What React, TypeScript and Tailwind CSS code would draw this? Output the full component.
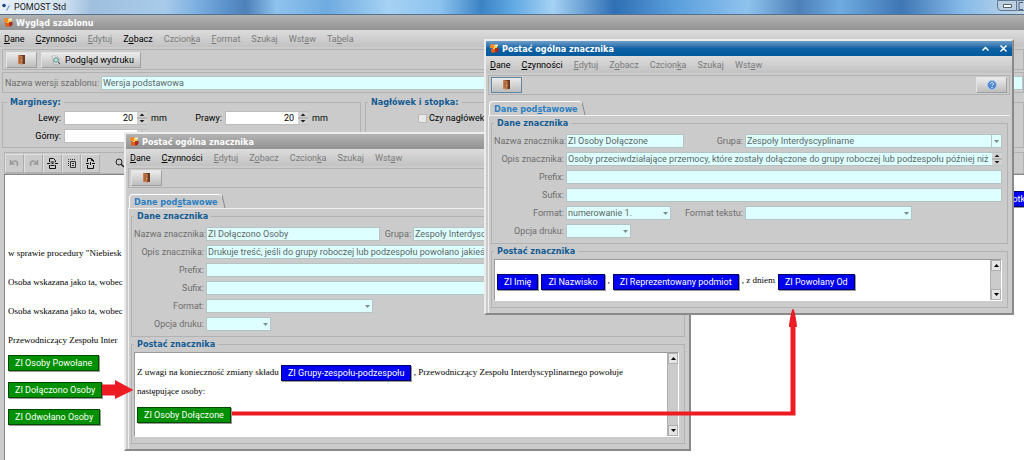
import { useId, type ReactNode } from "react";

const MENU = ["Dane", "Czynności", "Edytuj", "Zobacz", "Czcionka", "Szukaj", "Wstaw"];
const UNDERLINE: Record<string, number> = { Dane: 0, Czynności: 0, Edytuj: 0, Zobacz: 1, Czcionka: 6, Format: 0, Szukaj: 5, Wstaw: 3, Tabela: 2 };

function Hotkey({ text, at }: { text: string; at: number }) {
  return (
    <>
      {text.slice(0, at)}
      <u>{text[at]}</u>
      {text.slice(at + 1)}
    </>
  );
}

function CubeIcon() {
  return (
    <svg width="9" height="9" viewBox="0 0 9 9" className="shrink-0" aria-hidden>
      <path d="M1 4.500h4V8L3 9 1 8z" fill="#e0611a" />
      <path d="M3 1h4v4H3z" fill="#fbd34a" />
      <path d="M1 0h3v4H0V2z" fill="#f08a2c" />
      <path d="M5 4h3.500v3L6.500 8.500H5z" fill="#b02a1c" />
      <path d="M4.500 1.500l1-1H8v2z" fill="#fff3c4" />
    </svg>
  );
}

function DoorIcon() {
  return (
    <svg width="9" height="10" viewBox="0 0 9 10" aria-hidden>
      <path d="M1.500 0H8v9H1.500z" fill="#6b3a22" />
      <path d="M1 0l4.500 1v9L1 8.500z" fill="#c98154" />
      <path d="M2 1.500l2.500.5v6L2 7.500z" fill="#b0683e" />
      <circle cx="4.800" cy="5.500" r=".5" fill="#ffe0a0" />
    </svg>
  );
}

function TitleBar({ title, active = false, children }: { title: string; active?: boolean; children?: ReactNode }) {
  return (
    <header
      className={`flex h-[15px] items-center gap-[3px] pr-1 pl-1 font-[Tahoma,'DejaVu_Sans_Condensed',sans-serif] text-[9px] font-bold text-white ${
        active ? "bg-linear-to-b from-[#6c9fc9] via-[#0d62a3] to-[#005a9c]" : "bg-linear-to-b from-[#b4b4b4] to-[#929292]"
      }`}
    >
      <CubeIcon />
      <h2>{title}</h2>
      {children}
    </header>
  );
}

function MenuBar({ items, enabled }: { items: string[]; enabled: string[] }) {
  return (
    <nav className="flex h-[17px] items-center gap-[11px] bg-linear-to-b from-[#dcdcdc] to-[#c2c2c2] px-1">
      {items.map((item) => (
        <button key={item} type="button" className={enabled.includes(item) ? "text-black" : "text-[#7b7b7b]"}>
          <Hotkey text={item} at={UNDERLINE[item]} />
        </button>
      ))}
    </nav>
  );
}

function ToolButton({ label, focused = false, children }: { label?: string; focused?: boolean; children: ReactNode }) {
  return (
    <button
      type="button"
      aria-label={label}
      className={`flex h-4 min-w-[31px] items-center justify-center gap-1 border bg-linear-to-b from-[#ebebeb] to-[#bdbdbd] ${
        focused ? "border-[#5f87a6]" : "border-[#e4e4e4] border-r-[#a0a0a0] border-b-[#a0a0a0]"
      }`}
    >
      {children}
    </button>
  );
}

function Group({ title, className = "", children }: { title: string; className?: string; children: ReactNode }) {
  return (
    <fieldset className={`min-w-0 border border-[#b2b2b2] ${className}`}>
      <legend className="h-[11px] px-[3px] font-[Tahoma,'DejaVu_Sans_Condensed',sans-serif] leading-[11px] font-bold text-[#135b93]">{title}</legend>
      {children}
    </fieldset>
  );
}

const BOX = "h-[14px] min-w-0 border border-[#b4c4c4] bg-[#deffff] px-px text-[#5a6666]";

function Field({ label, value = "", className = "flex-1", labelClass = "w-[70px]", kind = "text" }: {
  label: string;
  value?: string;
  className?: string;
  labelClass?: string;
  kind?: "text" | "select" | "combo" | "memo";
}) {
  const id = useId();
  return (
    <>
      <label htmlFor={id} className={`shrink-0 text-right whitespace-nowrap text-[#6e6e6e] ${labelClass}`}>
        {label}
      </label>
      <div className={`relative flex min-w-0 ${className}`}>
        {kind === "select" || kind === "combo" ? (
          <select id={id} defaultValue={value} className={`${BOX} w-full appearance-none`}>
            <option>{value}</option>
          </select>
        ) : (
          <input id={id} defaultValue={value} className={`${BOX} w-full`} />
        )}
        {(kind === "select" || kind === "combo") && (
          <span className={`pointer-events-none absolute inset-y-0 right-0 flex w-[11px] items-center justify-center ${kind === "combo" ? "border border-[#b4c4c4]" : ""}`}>
            <svg width="5" height="3" viewBox="0 0 5 3" aria-hidden><path d="M0 0h5L2.500 3z" fill="#7d8d8d" /></svg>
          </span>
        )}
        {kind === "memo" && <Spinner />}
      </div>
    </>
  );
}

function Spinner() {
  return (
    <span className="pointer-events-none absolute inset-y-px right-0 flex w-[10px] flex-col items-center justify-around bg-[#d2d2d2]">
      <svg width="10" height="12" viewBox="0 0 10 12" aria-hidden>
        <path d="M0 6h10" stroke="#999" />
        <path d="M5 1.500L7.500 4h-5zM5 10.500L7.500 8h-5z" fill="#222" />
      </svg>
    </span>
  );
}

function Tag({ color = "blue", children }: { color?: "blue" | "green"; children: ReactNode }) {
  return (
    <span
      className={`inline-block h-4 border px-[6px] align-middle font-[Tahoma,Roboto,'Noto_Sans',sans-serif] text-[9px] leading-[14px] whitespace-nowrap text-white shadow-[1px_1px_0_#999] ${
        color === "blue" ? "border-[#00006a] bg-[#0000f0]" : "border-[#004800] bg-[#009000]"
      }`}
    >
      {children}
    </span>
  );
}

function Editor({ className = "", children }: { className?: string; children: ReactNode }) {
  return (
    <div className={`flex border border-[#9a9a9a] border-r-white border-b-white bg-white ${className}`}>
      <div className="min-w-0 flex-1 font-['Liberation_Serif',serif] text-[9px] text-black">{children}</div>
      <div className="flex w-[11px] flex-col justify-between border-l border-[#b0b0b0] bg-[#cbcbcb]">
        <button type="button" aria-label="W górę" className="flex h-[11px] items-center justify-center border border-[#b0b0b0] bg-[#e4e4e4]">
          <svg width="5" height="3" viewBox="0 0 5 3" aria-hidden><path d="M0 3h5L2.500 0z" /></svg>
        </button>
        <button type="button" aria-label="W dół" className="flex h-[11px] items-center justify-center border border-[#b0b0b0] bg-[#e4e4e4]">
          <svg width="5" height="3" viewBox="0 0 5 3" aria-hidden><path d="M0 0h5L2.500 3z" /></svg>
        </button>
      </div>
    </div>
  );
}

function MarkerWindow({ className, active = false, fields, children }: { className: string; active?: boolean; fields: ReactNode; children: ReactNode }) {
  return (
    <section className={`absolute border-2 border-[#ececec] border-r-[#8a8a8a] border-b-[#8a8a8a] bg-[#cbcbcb] ${className}`}>
      <TitleBar title="Postać ogólna znacznika" active={active}>
        {active && (
          <span className="ml-auto flex gap-[9px]">
            <button type="button" aria-label="Zwiń">
              <svg width="9" height="9" viewBox="0 0 9 9" fill="none" stroke="#fff" strokeWidth="1.500"><path d="M1.500 6.500l3-3 3 3" /></svg>
            </button>
            <button type="button" aria-label="Zamknij">
              <svg width="9" height="9" viewBox="0 0 9 9" fill="none" stroke="#fff" strokeWidth="1.500"><path d="M1.500 1.500l6 6M7.500 1.500l-6 6" /></svg>
            </button>
          </span>
        )}
      </TitleBar>
      <MenuBar items={MENU} enabled={["Dane", "Czynności"]} />
      <div className="mx-[2px] mt-[2px] flex h-5 items-center justify-between border border-[#b2b2b2] px-[2px]">
        <ToolButton label="Wyjście" focused={active}><DoorIcon /></ToolButton>
        {active && (
          <ToolButton label="Pomoc">
            <svg width="10" height="10" viewBox="0 0 10 10" aria-hidden>
              <circle cx="5" cy="5" r="4.500" fill="#4b86cf" stroke="#a9c6ea" />
              <path d="M3.500 4c0-2 3-2 3 0 0 1-1.500 1-1.500 2M5 7v1" fill="none" stroke="#fff" />
            </svg>
          </ToolButton>
        )}
      </div>
      <div className="mt-[6px] flex h-[14px] pl-[3px]">
        <button type="button" className="rounded-t border-t border-l border-white px-1 font-[Tahoma,'DejaVu_Sans_Condensed',sans-serif] font-bold text-[#2b7fc4]">
          <Hotkey text="Dane podstawowe" at={8} />
        </button>
        <svg width="4" height="14" viewBox="0 0 4 14" aria-hidden><path d="M0 1l3 13" stroke="#888" fill="none" /></svg>
      </div>
      <div className="mx-[2px] border-t border-l border-[#f0f0f0] px-[2px] pt-[2px] pb-[5px]">
        <Group title="Dane znacznika" className="pr-[5px] pb-[5px] pl-[2px]">
          <div className="flex flex-col gap-1 pt-[5px]">{fields}</div>
        </Group>
        <Group title="Postać znacznika" className="mt-[2px] pt-[2px] pr-[5px] pb-[6px] pl-[2px]">{children}</Group>
      </div>
    </section>
  );
}

function Row({ children }: { children: ReactNode }) {
  return <div className="flex items-center gap-[2px]">{children}</div>;
}

function Margin({ label, value, unit }: { label: string; value?: string; unit?: string }) {
  const id = useId();
  return (
    <div className="flex w-[161px] items-center">
      <label htmlFor={id} className="w-[57px] pr-[3px] text-right text-black">{label}</label>
      <div className="relative flex w-[83px]">
        <input id={id} defaultValue={value} className="h-[14px] w-full border border-[#bdbdbd] bg-white pr-[13px] text-right text-black" />
        <Spinner />
      </div>
      {unit && <span className="pl-1 text-black">{unit}</span>}
    </div>
  );
}

function EditorTools() {
  const cell = "flex h-[19px] w-[19px] items-center justify-center border border-[#e0e0e0] border-r-[#adadad] border-b-[#adadad]";
  return (
    <div className="flex h-[22px] items-center border border-[#b2b2b2]">
      <button type="button" aria-label="Cofnij" className={cell}>
        <svg width="11" height="10" viewBox="0 0 11 10" fill="none" stroke="#999" strokeWidth="1.500"><path d="M1.500 2v4h4M2 5.500C5 1 10 3 8 8" /></svg>
      </button>
      <button type="button" aria-label="Ponów" className={cell}>
        <svg width="11" height="10" viewBox="0 0 11 10" fill="none" stroke="#999" strokeWidth="1.500"><path d="M9.500 2v4h-4M9 5.500C6 1 1 3 3 8" /></svg>
      </button>
      <button type="button" aria-label="Podział strony" className={cell}>
        <svg width="11" height="11" viewBox="0 0 11 11" fill="none" stroke="#111"><path d="M2.500 4V.5h4l2 2V4M2.500 7v3.500h6V7M0 5.500h3M4.500 5.500h2M8 5.500h3M3.500 4h4M3.500 7.500h4" /></svg>
      </button>
      <button type="button" aria-label="Wstaw stronę" className={cell}>
        <svg width="10" height="11" viewBox="0 0 10 11" fill="none" stroke="#333"><path d="M1.500 8V1.500H8" strokeDasharray="1 1" /><path d="M3.500 3.500h5v6h-5zM5 5.500h2M5 7.500h2" /></svg>
      </button>
      <button type="button" aria-label="Ustawienia strony" className={cell}>
        <svg width="9" height="11" viewBox="0 0 9 11" fill="none" stroke="#111"><path d="M1.500 4V.5h4l2 2V4M1.500 7v3.500h6V7M5.500.5v2h2M0 5.500h3M6 5.500h3M4.500 4v3" /></svg>
      </button>
      <button type="button" aria-label="Szukaj" className="ml-[10px] flex h-[19px] w-[19px] items-center justify-center">
        <svg width="10" height="10" viewBox="0 0 10 10" fill="none" stroke="#222"><circle cx="4" cy="4" r="3" /><path d="M6 6l3 3" strokeWidth="1.500" /></svg>
      </button>
    </div>
  );
}

export default function App() {
  return (
    <main className="relative flex h-screen flex-col overflow-hidden bg-[#cbcbcb] font-[Tahoma,Roboto,'Noto_Sans',sans-serif] text-[9px] leading-[12px]">
      <header className="flex h-[15px] shrink-0 items-center gap-1 border-b border-[#53718c] bg-[linear-gradient(90deg,#e8f0f8_0%,#d3e3f3_6%,#9fbfde_9%,#a9cbea_16%,#7fb2e2_19%,#5c92cc_22%,#4c80b8_24%,#8fc3ee_27%,#6fabe0_32%,#a6d2f4_38%,#8cc2ee_43%,#3b83c4_47%,#5fa8e2_50%,#a6d2f4_54%,#2f6fb4_60%,#5b9fdc_66%,#8fc3ee_73%,#4c80b8_78%,#6fabe0_82%,#3f76b4_88%,#86bbe9_94%,#c5d6e6_100%)] pl-[2px] text-[#1a1a1a]">
        <svg width="8" height="8" viewBox="0 0 8 8" aria-hidden>
          <circle cx="2" cy="2.500" r="1.800" fill="#23427c" />
          <path d="M4 7l3-5 1 1-3 5z" fill="#7ba6d6" />
        </svg>
        <h1>POMOST Std</h1>
        <div className="ml-auto flex h-full pb-[3px]">
          <button type="button" aria-label="Minimalizuj" className="flex w-5 items-center justify-center rounded-bl border border-[#5c7893] bg-[#bccfe2]">
            <svg width="9" height="4" viewBox="0 0 9 4"><path d="M.5.5h8v3h-8z" fill="#fff" stroke="#51616f" /></svg>
          </button>
          <button type="button" aria-label="Maksymalizuj" className="flex w-[7px] items-center border-y border-[#5c7893] bg-[#bccfe2]">
            <svg width="6" height="8" viewBox="0 0 6 8"><path d="M6 .5H2v7h4" fill="none" stroke="#51616f" /></svg>
          </button>
        </div>
      </header>
      <TitleBar title="Wygląd szablonu" />
      <MenuBar
        items={["Dane", "Czynności", "Edytuj", "Zobacz", "Czcionka", "Format", "Szukaj", "Wstaw", "Tabela"]}
        enabled={["Dane", "Czynności", "Zobacz"]}
      />
      <div className="ml-[2px] flex flex-1 flex-col pt-[2px]">
        <div className="flex h-[21px] shrink-0 items-center gap-1 border border-[#b2b2b2] pl-[3px]">
          <ToolButton label="Wyjście"><DoorIcon /></ToolButton>
          <ToolButton>
            <svg width="10" height="10" viewBox="0 0 10 10" className="ml-[9px]" aria-hidden>
              <path d="M1 1h5l2 2v6H3z" fill="#f4f4f4" stroke="#999" strokeWidth=".6" />
              <circle cx="5" cy="5" r="2.300" fill="#b9e0d4" stroke="#5d8f86" />
              <path d="M7 7l2 2" stroke="#444" />
            </svg>
            <span className="pr-[6px]"><Hotkey text="Podgląd wydruku" at={3} /></span>
          </ToolButton>
        </div>
        <div className="mt-[2px] flex h-[21px] shrink-0 items-center gap-[2px] border border-[#b2b2b2] pl-[2px]">
          <Field label="Nazwa wersji szablonu:" value="Wersja podstawowa" labelClass="" />
        </div>
        <div className="mt-1 flex h-[51px] shrink-0 gap-1">
          <Group title="Marginesy:" className="w-[359px] pl-1">
            <div className="flex flex-wrap gap-y-1 pt-[3px]">
              <Margin label="Lewy:" value="20" unit="mm" />
              <Margin label="Prawy:" value="20" unit="mm" />
              <Margin label="Górny:" />
            </div>
          </Group>
          <Group title="Nagłówek i stopka:" className="flex-1 pl-[2px]">
            <label className="ml-[50px] flex items-center gap-[2px] pt-1 text-black">
              <input type="checkbox" className="h-[9px] w-[9px] appearance-none border border-[#bbb] bg-[#e8e8e8]" />
              Czy nagłówek
            </label>
          </Group>
        </div>
        <div className="ml-[2px] pt-1">
          <EditorTools />
        </div>
        <div className="ml-[2px] flex flex-1 flex-col items-start border-t border-l border-[#888] bg-white pl-[3px] font-['Liberation_Serif',serif] text-[9px] text-black">
          <div className="-mr-[13px] self-end pt-4"><Tag>Notka</Tag></div>
          <p className="pt-10">w sprawie procedury "Niebiesk</p>
          <p className="pt-[17px]">Osoba wskazana jako ta, wobec</p>
          <p className="pt-[17px]">Osoba wskazana jako ta, wobec</p>
          <p className="pt-[17px]">Przewodniczący Zespołu Inter</p>
          <div className="flex flex-col items-start gap-[11px] pt-[9px]">
            <Tag color="green">ZI Osoby Powołane</Tag>
            <Tag color="green">ZI Dołączono Osoby</Tag>
            <Tag color="green">ZI Odwołano Osoby</Tag>
          </div>
        </div>
      </div>

      <MarkerWindow
        className="top-[132px] left-[124px] w-[567px]"
        fields={
          <>
            <Row>
              <Field label="Nazwa znacznika:" value="ZI Dołączono Osoby" className="w-[174px]" />
              <Field label="Grupa:" value="Zespoły Interdyscyplinarne" labelClass="w-[29px]" kind="combo" />
            </Row>
            <Row><Field label="Opis znacznika:" value="Drukuje treść, jeśli do grupy roboczej lub podzespołu powołano jakieś osoby" kind="memo" /></Row>
            <Row><Field label="Prefix:" /></Row>
            <Row><Field label="Sufix:" /></Row>
            <Row><Field label="Format:" kind="select" className="w-[167px]" /></Row>
            <Row><Field label="Opcja druku:" kind="select" className="w-[65px]" /></Row>
          </>
        }
      >
        <Editor className="h-[85px]">
          <div className="px-[2px] pt-[10px] leading-[19px]">
            <p>Z uwagi na konieczność zmiany składu <Tag>ZI Grupy-zespołu-podzespołu</Tag> , Przewodniczący Zespołu Interdyscyplinarnego powołuje</p>
            <p>następujące osoby:</p>
            <div className="pt-1"><Tag color="green">ZI Osoby Dołączone</Tag></div>
          </div>
        </Editor>
      </MarkerWindow>

      <MarkerWindow
        active
        className="top-[39px] left-[484px] w-[530px]"
        fields={
          <>
            <Row>
              <Field label="Nazwa znacznika:" value="ZI Osoby Dołączone" className="w-[118px]" />
              <Field label="Grupa:" value="Zespoły Interdyscyplinarne" labelClass="w-[57px]" kind="combo" />
            </Row>
            <Row><Field label="Opis znacznika:" value="Osoby przeciwdziałające przemocy, które zostały dołączone do grupy roboczej lub podzespołu później niż" kind="memo" /></Row>
            <Row><Field label="Prefix:" /></Row>
            <Row><Field label="Sufix:" /></Row>
            <Row>
              <Field label="Format:" value="numerowanie 1." kind="select" className="w-[105px]" />
              <Field label="Format tekstu:" kind="select" className="w-[167px]" />
            </Row>
            <Row><Field label="Opcja druku:" kind="select" className="w-[65px]" /></Row>
          </>
        }
      >
        <Editor className="h-[42px]">
          <p className="flex gap-[3px] px-[2px] pt-[14px]">
            <Tag>ZI Imię</Tag>
            <Tag>ZI Nazwisko</Tag>
            <span>,</span>
            <Tag>ZI Reprezentowany podmiot</Tag>
            <span>, z dniem</span>
            <Tag>ZI Powołany Od</Tag>
          </p>
        </Editor>
      </MarkerWindow>

      <svg className="pointer-events-none absolute top-0 left-0" width="1024" height="460" viewBox="0 0 1024 460" fill="#ed1c24" aria-hidden>
        <path d="M102 384.500h13V380l18.500 10L115 399v-3.500h-13z" />
        <path d="M232 411.500h558.500V327h-1.500c0-4 2-14 3-17q1-2 2 0c1 3 3 13 3 17h-1.500v88.500H232z" />
      </svg>
    </main>
  );
}
